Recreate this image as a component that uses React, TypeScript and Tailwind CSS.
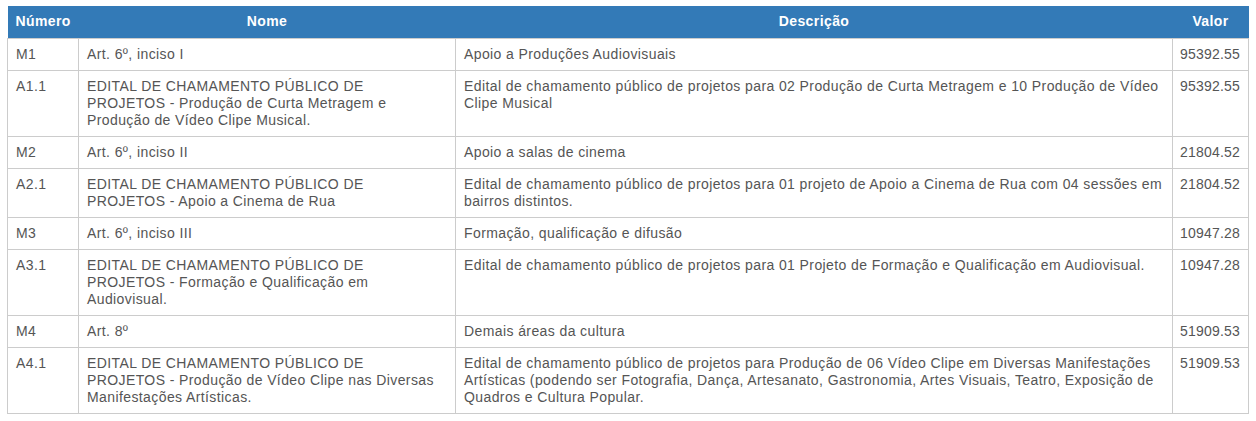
import React from "react";

interface Row {
  numero: string;
  nome: string[];
  descricao: string;
  valor: string;
}

// Nome is split where the original table breaks its lines
const rows: Row[] = [
  { numero: "M1", nome: ["Art. 6º, inciso I"], descricao: "Apoio a Produções Audiovisuais", valor: "95392.55" },
  {
    numero: "A1.1",
    nome: [
      "EDITAL DE CHAMAMENTO PÚBLICO DE",
      "PROJETOS - Produção de Curta Metragem e",
      "Produção de Vídeo Clipe Musical.",
    ],
    descricao:
      "Edital de chamamento público de projetos para 02 Produção de Curta Metragem e 10 Produção de Vídeo Clipe Musical",
    valor: "95392.55",
  },
  { numero: "M2", nome: ["Art. 6º, inciso II"], descricao: "Apoio a salas de cinema", valor: "21804.52" },
  {
    numero: "A2.1",
    nome: ["EDITAL DE CHAMAMENTO PÚBLICO DE", "PROJETOS - Apoio a Cinema de Rua"],
    descricao:
      "Edital de chamamento público de projetos para 01  projeto de Apoio a Cinema de Rua com 04 sessões em bairros distintos.",
    valor: "21804.52",
  },
  { numero: "M3", nome: ["Art. 6º, inciso III"], descricao: "Formação, qualificação e difusão", valor: "10947.28" },
  {
    numero: "A3.1",
    nome: ["EDITAL DE CHAMAMENTO PÚBLICO DE", "PROJETOS - Formação e Qualificação em", "Audiovisual."],
    descricao: "Edital de chamamento público de projetos para 01 Projeto de Formação e Qualificação em Audiovisual.",
    valor: "10947.28",
  },
  { numero: "M4", nome: ["Art. 8º"], descricao: "Demais áreas da cultura", valor: "51909.53" },
  {
    numero: "A4.1",
    nome: [
      "EDITAL DE CHAMAMENTO PÚBLICO DE",
      "PROJETOS - Produção de Vídeo Clipe nas Diversas",
      "Manifestações Artísticas.",
    ],
    descricao:
      "Edital de chamamento público de projetos para Produção de 06 Vídeo Clipe em Diversas Manifestações Artísticas (podendo ser Fotografia, Dança, Artesanato, Gastronomia, Artes Visuais, Teatro, Exposição de Quadros e Cultura Popular.",
    valor: "51909.53",
  },
];

const th = "h-[32px] px-2 text-center text-[14px] font-bold text-white";
const td = "border border-[#cccccc] px-2 py-[7px] align-top";

export default function App() {
  return (
    <div className="bg-white pl-[7px] pr-[8px] pt-[6px] pb-[7px] font-['Liberation_Sans',Arial,sans-serif]">
      <table className="w-full table-fixed border-collapse text-[14px] leading-[17px] tracking-[0.4px] text-[#555555]">
        <colgroup>
          <col className="w-[71px]" />
          <col className="w-[377px]" />
          <col className="w-[717px]" />
          <col className="w-[76px]" />
        </colgroup>
        <thead>
          <tr className="bg-[#337ab7]">
            <th className={th}>Número</th>
            <th className={th}>Nome</th>
            <th className={th}>Descrição</th>
            <th className={th}>Valor</th>
          </tr>
        </thead>
        <tbody>
          {rows.map((row) => (
            <tr key={row.numero}>
              <td className={td}>{row.numero}</td>
              <td className={td}>
                {row.nome.map((line) => (
                  <span key={line} className="block whitespace-nowrap">
                    {line}
                  </span>
                ))}
              </td>
              <td className={td}>{row.descricao}</td>
              <td className="border border-[#cccccc] px-[7px] py-[7px] align-top tracking-[0.2px]">{row.valor}</td>
            </tr>
          ))}
        </tbody>
      </table>
    </div>
  );
}
